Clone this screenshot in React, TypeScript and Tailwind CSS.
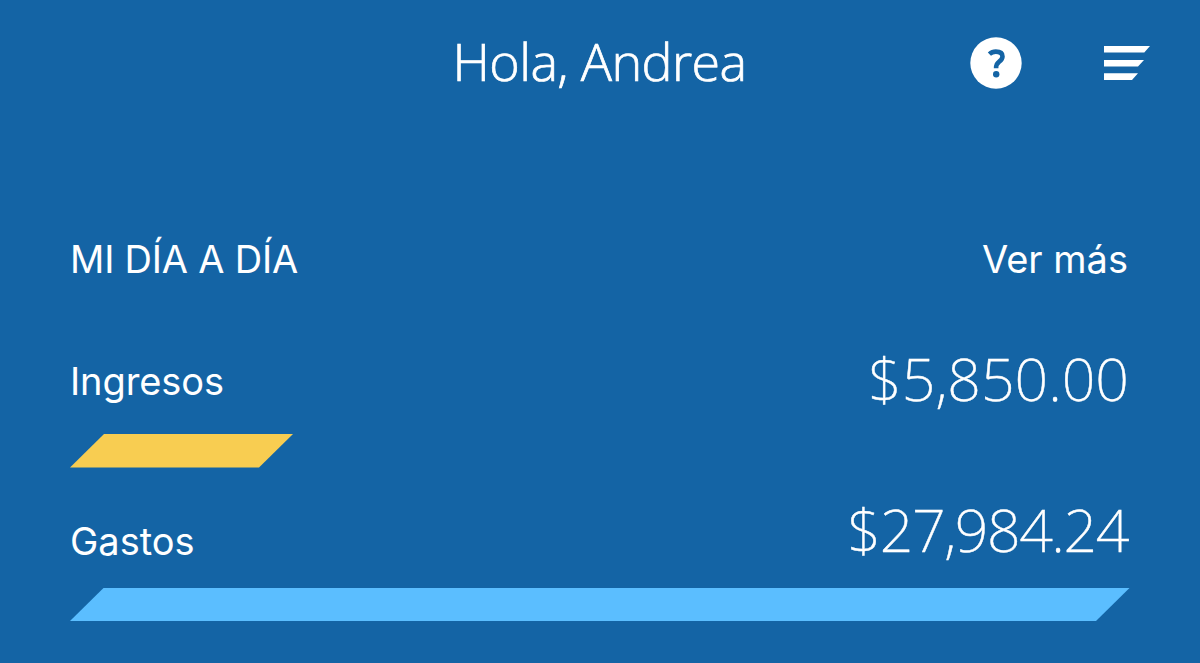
import React from "react";

const amount =
  "-mt-px h-[60px] whitespace-nowrap font-['Noto_Sans',sans-serif] text-[59px] leading-[60px] font-extralight [-webkit-text-stroke:0.45px_white]";
const label = "whitespace-nowrap font-['Inter',sans-serif] text-[38px] leading-[48px] font-normal";

function Header() {
  return (
    <header className="grid h-[126px] shrink-0 grid-cols-[1fr_auto_1fr] items-center pr-[50px]">
      <span />
      <h1 className="-mt-1 pl-[49px] whitespace-nowrap font-['Open_Sans',sans-serif] text-[52px] leading-[60px] font-light tracking-[-0.6px] [-webkit-text-stroke:0.7px_white]">
        Hola, Andrea
      </h1>
      <div className="flex items-center justify-end gap-[82px]">
        <button aria-label="Ayuda" className="block">
          <svg width="52" height="52" viewBox="0 0 52 52" fill="none">
            <circle cx="26" cy="26" r="25.7" fill="#fff" />
            <path
              d="M19.4 17.2C21.4 15.3 23.4 14.6 25.8 14.6C30.2 14.6 32.5 16.3 32.5 19.4C32.5 22 30.9 23.3 29.2 24.6C27.2 26.1 26.1 27.4 26.1 31.2"
              stroke="#1464a5"
              strokeWidth="4.6"
            />
            <circle cx="26.2" cy="37.2" r="3.2" fill="#1464a5" />
          </svg>
        </button>
        <button aria-label="Menú" className="block">
          <svg width="46" height="34" viewBox="0 0 46 34" fill="#fff">
            <path d="M0 0H46L40.3 6.5H0ZM0 14H40L34 20.5H0ZM0 27.2H34L28 34H0Z" />
          </svg>
        </button>
      </div>
    </header>
  );
}

export default function App() {
  return (
    <main className="flex h-[663px] w-[1200px] flex-col overflow-hidden bg-[#1464a5] text-white">
      <Header />
      <section className="flex flex-col pr-[72px] pl-[70px]">
        <div className="mt-[109px] flex h-12 items-center justify-between">
          <h2 className={`${label} tracking-[-0.2px]`}>MI DÍA A DÍA</h2>
          <a className={label}>Ver más</a>
        </div>
        <div className="mt-[66px] flex h-[60px] items-start justify-between">
          <span className={`${label} pt-[8px] tracking-[-0.1px]`}>Ingresos</span>
          <span className={`${amount} -mr-px`}>$5,850.00</span>
        </div>
        <div className="mt-[25px] h-[33.5px] w-[223px] bg-[#f8cd51] [clip-path:polygon(34px_0,100%_0,calc(100%_-_34px)_100%,0_100%)]" />
        <div className="mt-[32.5px] flex h-[60px] items-start justify-between">
          <span className={`${label} pt-[17px]`}>Gastos</span>
          <span className={`${amount} tracking-[-1.4px]`}>$27,984.24</span>
        </div>
        <div className="mt-[27.5px] h-[33.5px] w-[1060px] bg-[#5bbeff] [clip-path:polygon(34px_0,100%_0,calc(100%_-_34px)_100%,0_100%)]" />
      </section>
    </main>
  );
}
